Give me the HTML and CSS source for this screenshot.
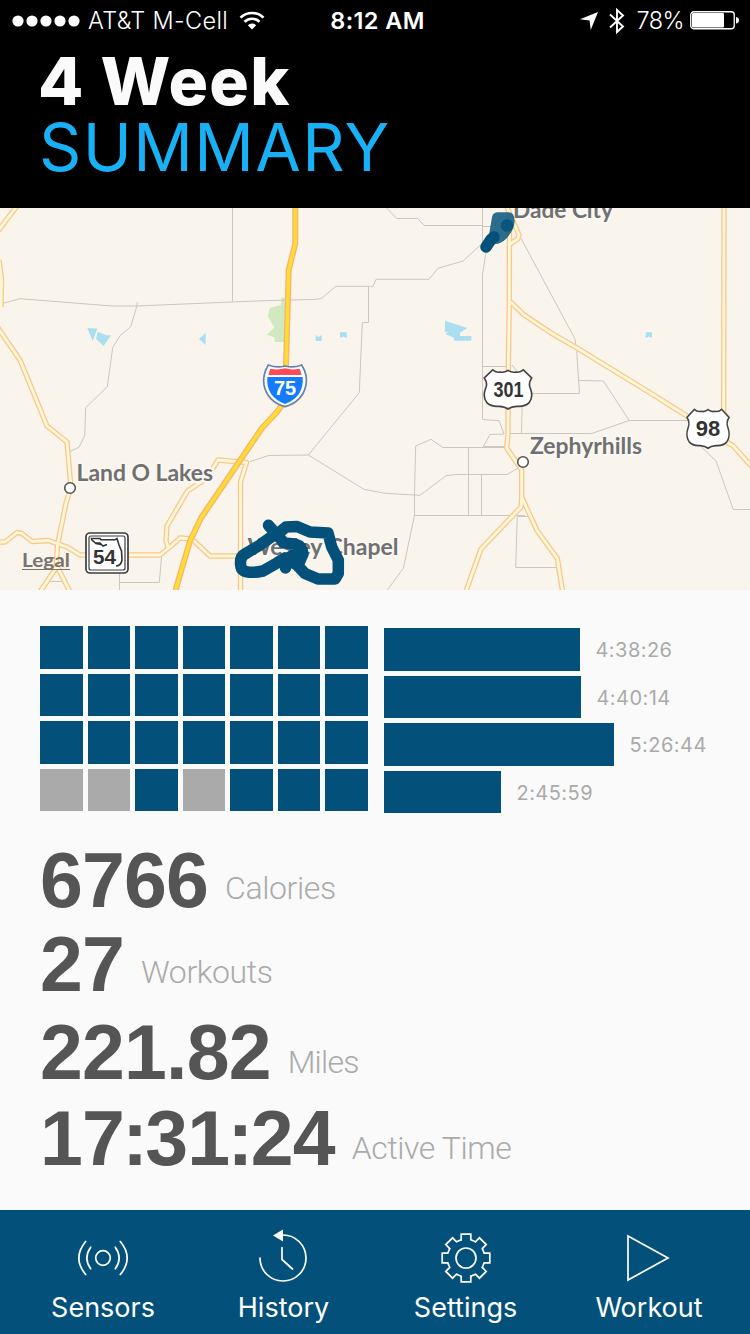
FILE: index.html
```html
<!DOCTYPE html>
<html lang="en">
<head>
    <meta charset="UTF-8">
    <meta name="viewport" content="width=device-width, initial-scale=1.0">
    <title>4 Week Summary</title>
    <link rel="stylesheet" href="styles.css">
</head>
<body>
    <header class="header">
        <div class="status-bar">
            <div class="status-left">
                <svg class="signal" viewBox="0 0 68 12" fill="#fff">
                    <circle cx="6" cy="6" r="5.6"/><circle cx="20" cy="6" r="5.6"/><circle cx="34" cy="6" r="5.6"/><circle cx="48" cy="6" r="5.6"/><circle cx="62" cy="6" r="5.6"/>
                </svg>
                <span class="carrier">AT&amp;T M-Cell</span>
                <svg class="wifi" viewBox="0 0 26 20" fill="none" stroke="#fff" stroke-width="2.6">
                    <path d="M1.5 6.6 A16.5 16.5 0 0 1 24.5 6.6"/>
                    <path d="M5.5 10.8 A10.8 10.8 0 0 1 20.5 10.8"/>
                    <path d="M13 18.5 L8.8 14.2 A6.2 6.2 0 0 1 17.2 14.2 Z" fill="#fff" stroke="none"/>
                </svg>
            </div>
            <span class="clock">8:12 AM</span>
            <div class="status-right">
                <svg class="location" viewBox="0 0 18 18"><path d="M18 0 L10.7 18 L9.6 8.4 L0 7.3 Z" fill="#fff"/></svg>
                <svg class="bluetooth" viewBox="0 0 16 28" fill="none" stroke="#fff" stroke-width="1.9"><path d="M1 7.5 L14 19.5 L8 25 V3 L14 8.5 L1 20.5"/></svg>
                <span class="percent">78%</span>
                <svg class="battery" viewBox="0 0 50 19">
                    <rect x=".75" y=".75" width="43.5" height="17" rx="3" fill="none" stroke="#fff" stroke-width="1.3"/>
                    <rect x="2" y="2" width="32" height="14.5" rx="1.2" fill="#fff"/>
                    <path d="M46 6 Q49 6.5 49 9.2 Q49 12 46 12.5 Z" fill="#fff"/>
                </svg>
            </div>
        </div>
        <h1 class="title"><span class="title-main">4 Week</span><span class="title-sub">SUMMARY</span></h1>
    </header>

    <section class="map">
        <svg viewBox="0 208 750 382">
            <defs>
                <path id="us-shield" d="M128 495 Q138 504 150 501 Q163 504 174 496 Q185 504 198 501 Q210 504 220 495 L245 519 Q234 535 241 550 Q251 575 238 592 Q225 606 200 604 Q183 605 174 612 Q165 605 148 604 Q123 606 110 592 Q97 575 107 550 Q114 535 103 519 Z"/>
                <!-- major roads, stroked twice for the casing -->
                <g id="roads">
                    <path d="M17 206 L-2 231"/>
                    <path d="M-1 260 L1.5 279 L1 307"/>
                    <path d="M-2 328 L20 360 L47 426 L67 442 L71 488 L66 503 L57.5 545 L56 568 L40 592"/>
                    <path d="M57 566 L70 592"/>
                    <path d="M0 542 H5 L17 532.5 L22 533.5 L32 541.5 L48 540.5 L67 547 L80 555 H160 L170 547 L180 538 L192 539 L210 556 H240"/>
                    <path d="M168 547 L166 541 L167 526 L187.5 491 L207 478 L218 460 L246.5 462.5 L240.5 482 V592"/>
                    <path d="M506 205 L519 235 L517.7 239 L510 244"/>
                    <path d="M509.5 215 L509.3 302 L508.3 365 L508 435 L506.7 448 L521.7 470 V498 L521 507 L481 549 L465 594"/>
                    <path d="M522 498 L537.3 531 L557.3 558.3 L563 594"/>
                    <path d="M510.5 301.7 L523.3 314.3 L550 332.3 L577 348 L650 392.7 L688 416.7 L728 443 L733 445.7 L753 468"/>
                    <path d="M724 205 L723.7 415"/>
                </g>
                <path id="interstate" d="M295.3 205 V243.5 L288.7 270 L286 365 L284 402 L277 412 L262 428 L239 462 L201 518 L190 541 L177 585 L175 594"/>
            </defs>
            <rect class="land" y="208" width="750" height="382"/>
            <path class="park" d="M281.7 297.7 L286 298 L284 342 H275 L274 337.3 L266.7 334.7 L274.3 327.7 L267.7 316 L270 307.7 L280.7 305 Z"/>
            <g class="water">
                <path d="M87.3 328 L97.3 328.7 L92.7 341 Z"/>
                <path d="M97.7 331.7 L107 335.5 L111 335 L103.7 346 L96 339 Z"/>
                <path d="M205.7 332.7 V345 L199 339 Z"/>
                <path d="M315.7 335 L318.5 337 L321.7 335 V341 H315.7 Z"/>
                <path d="M340 332.3 H346.7 V338 L343 336.5 L340 338 Z"/>
                <path d="M445 320.7 L467.3 328 L460 332.7 V336 H471.3 V340.7 H454 V337.7 L445 333.7 L449 332 H445 Z"/>
                <path d="M645.7 332.3 H652 V338 L649 336.5 L645.7 338 Z"/>
            </g>
            <g class="minor">
                <path d="M0 304 L20 298.7 L112 306 H137 L231 302 L265 300.7 L317 299.3 L321.7 298.3 L336 286.3 H373 L376 279.3 H429 L438 268.3 L463 261 L486 240"/>
                <path d="M232.5 208 V301"/>
                <path d="M137.3 302 L136.7 306.7 L130.7 326.7 L120 335.7 L112.7 347.7 L107.3 386.7 L85.7 407.7 L84.7 435.7 L79 447.3 L69.3 451.7"/>
                <path d="M161.7 555.7 L159.3 582.5 H119.5 M119.5 573 V590 M46.7 581.5 H62.7"/>
                <path d="M386.7 208 L396.7 218.5 H417.7 L424.3 225.5 H482.5 M482.5 208 V226.5 H492"/>
                <path d="M368.5 286.3 V322.5 H362.3 L359.3 392.7 L308.3 455 L268.3 455.5 L250 461.7"/>
                <path d="M308.3 455 L364 489.3 L385 493.3 L420 495.3 L446 475.7 L456.7 474.5 H507 L518 468"/>
                <path d="M387.3 590 L403.3 568.3 L414.5 515.5 V491.7 L415.7 446 L431 439.3 L442.7 447.5 H506"/>
                <path d="M414.5 515.5 H525 M468.5 447 V515 M481.5 474 V515"/>
                <path d="M486 251.7 L482.5 274.3 V419.5 L499 420.7 L504 434 L490 434.5 L483.3 446.5 H505 M482.5 366.5 H506"/>
                <path d="M482.5 226 V242"/>
                <path d="M521 238.3 L575 339 L576.7 351.7 L579.5 393.5 H522.5 L521.5 433"/>
                <path d="M579 380.5 L603.3 381 L629.3 420.5 H688 M507 433.5 H591.7 L629.3 420.5 M512 365 L520 375"/>
                <path d="M701.7 447.3 L716 461 L733.3 509.5 H750"/>
                <path d="M528.3 516.5 H517.3 L515.7 567.5 H557"/>
            </g>
            <use href="#roads" class="road-casing"/>
            <use href="#roads" class="road-fill"/>
            <use href="#interstate" class="interstate-casing"/>
            <use href="#interstate" class="interstate-fill"/>

            <g class="place">
                <text x="513" y="218" textLength="100" lengthAdjust="spacingAndGlyphs">Dade City</text>
                <text x="76.5" y="481" textLength="136.5" lengthAdjust="spacingAndGlyphs">Land O Lakes</text>
                <text x="530" y="454.3" textLength="112" lengthAdjust="spacingAndGlyphs">Zephyrhills</text>
                <text x="247.5" y="554.6" textLength="151" lengthAdjust="spacingAndGlyphs">Wesley Chapel</text>
            </g>
            <text class="legal" x="22" y="567" textLength="48" lengthAdjust="spacingAndGlyphs">Legal</text>
            <path class="legal-line" d="M22 569.5 H70"/>
            <circle class="town" cx="70" cy="488" r="5.3"/>
            <circle class="town" cx="523" cy="462" r="5.3"/>

            <g transform="translate(230 205) scale(.3333)">
                <path d="M115 480 Q140 490 165 483 Q190 490 215 480 Q234 510 228 540 Q218 590 165 605 Q112 590 102 540 Q97 510 115 480 Z" fill="#fff" stroke="#6681ac" stroke-width="5"/>
                <path d="M121 491 Q145 496 165 490 Q185 496 209 491 L215 510 H115 Z" fill="#fd4a56"/>
                <path d="M112 516 H218 Q223 575 165 597 Q107 575 112 516 Z" fill="#147bfc"/>
            </g>
            <text class="route route-75" x="285" y="395">75</text>
            <use href="#us-shield" class="shield" transform="translate(450 205) scale(.3333)"/>
            <text class="route route-301" x="508.5" y="397" textLength="30" lengthAdjust="spacingAndGlyphs">301</text>
            <use href="#us-shield" class="shield" transform="translate(656.4 244.3) scale(.2967 .3333)"/>
            <text class="route route-98" x="708" y="436">98</text>
            <rect x="86" y="533" width="42" height="40" rx="4" fill="#fff" stroke="#3d3d3d" stroke-width="1.7"/>
            <rect x="89" y="536" width="36" height="34" rx="2" fill="#fff" stroke="#3d3d3d" stroke-width="1.2"/>
            <path class="florida" d="M101 544.5 L96 543.5 L92 540 L91.5 538.5 H100 L101 539.8 H115 L117 538.5 L119 545 L121.5 551 L122 560 Q121 566 116 566 M96 543 L100 543 L103 546 L107 544.5"/>
            <text class="route" x="104.5" y="564" textLength="23" lengthAdjust="spacingAndGlyphs">54</text>

            <g class="track">
                <path d="M268.5 525.3 L279 537 L284 543 L295 544 Q302.5 546 303 554 L299 563"/>
                <path d="M278 533.5 L286 527 L297 526.5 L310 532 L328 533 L331.7 547 L338.3 560 L338.3 573.5 L335 579 H318 L305 573.5 L297 565 L285 558 L277 563 L263 571 Q243 575 241 567 Q239 557 245 554 L260 545 L274 535"/>
                <path d="M285.5 568 V560 L293 555"/>
            </g>
            <path class="blob" d="M491.7 219 Q492 213 497 212.3 H509 Q514.7 213 514.7 221 Q514.5 229 507 238 Q501 244 495 244 L489 235 Z"/>
            <circle class="blob-dot" cx="507" cy="225.5" r="6.3"/>
            <path class="blob-line" d="M486 247 L491 239.5 L494 237"/>
        </svg>
    </section>

    <main class="summary">
        <div class="charts">
            <div class="calendar">
                <i></i><i></i><i></i><i></i><i></i><i></i><i></i>
                <i></i><i></i><i></i><i></i><i></i><i></i><i></i>
                <i></i><i></i><i></i><i></i><i></i><i></i><i></i>
                <i class="rest"></i><i class="rest"></i><i></i><i class="rest"></i><i></i><i></i><i></i>
            </div>
            <div class="weeks">
                <div class="week"><div class="bar" style="width: 196px"></div><span>4:38:26</span></div>
                <div class="week"><div class="bar" style="width: 197px"></div><span>4:40:14</span></div>
                <div class="week"><div class="bar" style="width: 230px"></div><span>5:26:44</span></div>
                <div class="week"><div class="bar" style="width: 117px"></div><span>2:45:59</span></div>
            </div>
        </div>
        <div class="stats">
            <div class="stat calories"><strong>6766</strong><span>Calories</span></div>
            <div class="stat workouts"><strong>27</strong><span>Workouts</span></div>
            <div class="stat miles"><strong>221.82</strong><span>Miles</span></div>
            <div class="stat time"><strong>17<b>:</b>31<b>:</b>24</strong><span>Active Time</span></div>
        </div>
    </main>

    <nav class="tab-bar">
        <a class="tab">
            <svg viewBox="-30 -30 60 60">
                <circle r="7.3"/>
                <path d="M-12.3 -10.8 Q-20 0 -12.3 10.8 M12.3 -10.8 Q20 0 12.3 10.8"/>
                <path d="M-17.3 -16.5 Q-31 0 -17.3 16.5 M17.3 -16.5 Q31 0 17.3 16.5"/>
            </svg>
            <span>Sensors</span>
        </a>
        <a class="tab">
            <svg viewBox="-30 -30 60 60">
                <path d="M-24 0 A23 23 0 1 0 -1 -23 M-2 -10.5 V1.5 L8.5 11"/>
                <path class="solid" d="M-11 -22.5 L-1 -28.5 V-16.5 Z"/>
            </svg>
            <span>History</span>
        </a>
        <a class="tab">
            <svg viewBox="-30 -30 60 60">
                <defs><path id="tooth" d="M-4.8 -18.2 V-23.8 H4.8 V-18.2 L9.5 -16.3"/></defs>
                <circle r="10"/>
                <use href="#tooth"/>
                <use href="#tooth" transform="rotate(45)"/>
                <use href="#tooth" transform="rotate(90)"/>
                <use href="#tooth" transform="rotate(135)"/>
                <use href="#tooth" transform="rotate(180)"/>
                <use href="#tooth" transform="rotate(225)"/>
                <use href="#tooth" transform="rotate(270)"/>
                <use href="#tooth" transform="rotate(315)"/>
            </svg>
            <span>Settings</span>
        </a>
        <a class="tab">
            <svg viewBox="-30 -30 60 60"><path d="M-21 -22 L19 0 L-21 22 Z"/></svg>
            <span>Workout</span>
        </a>
    </nav>
</body>
</html>
```
FILE: styles.css
```css
* {
    margin: 0;
    padding: 0;
    box-sizing: border-box;
}

body {
    width: 750px;
    height: 1334px;
    display: flex;
    flex-direction: column;
    overflow: hidden;
    background: #fafafa;
    font-family: Inter, "Liberation Sans", sans-serif;
}

svg {
    display: block;
    flex: none;
}

/* header */
.header {
    height: 208px;
    background: #000;
    color: #fff;
}

.status-bar {
    height: 41px;
    padding: 0 10px 0 12px;
    display: grid;
    grid-template-columns: 1fr auto 1fr;
    align-items: center;
    font-size: 23.5px;
    line-height: 41px;
}

.status-left,
.status-right {
    display: flex;
    align-items: center;
}

.status-right {
    justify-content: flex-end;
}

.signal {
    width: 68px;
    height: 12px;
}

.carrier {
    margin: 0 11px 0 8px;
    font-weight: 350;
    letter-spacing: 0.35px;
}

.wifi {
    width: 26px;
    height: 20px;
}

.clock {
    font-weight: 600;
    letter-spacing: 0.4px;
    margin-left: 3px;
}

.location {
    width: 18px;
    height: 18px;
    margin-right: 11px;
}

.bluetooth {
    width: 16px;
    height: 28px;
    margin-right: 12px;
}

.percent {
    margin-right: 6px;
    font-weight: 350;
    letter-spacing: -0.6px;
}

.battery {
    width: 50px;
    height: 19px;
}

.title {
    padding: 7px 38px 0;
    font-size: 66px;
    line-height: 66px;
}

.title span {
    display: block;
}

.title-main {
    color: #fafafa;
    font-weight: 800;
    letter-spacing: 1.3px;
}

.title-sub {
    padding-left: 1px;
    color: #18b1f5;
    font-weight: 370;
    letter-spacing: 1.4px;
}

/* map */
.map svg {
    width: 750px;
    height: 382px;
}

.land { fill: #f9f4ec; }
.park { fill: #d1e9c1; }
.water { fill: #aadff2; }

.minor {
    fill: none;
    stroke: #cbc8c1;
    stroke-width: 1;
}

.road-casing {
    fill: none;
    stroke: #f8c78f;
    stroke-width: 5.4;
    stroke-linejoin: round;
}

.road-fill {
    fill: none;
    stroke: #fff8d6;
    stroke-width: 2.8;
    stroke-linejoin: round;
}

.interstate-casing {
    fill: none;
    stroke: #f5b56c;
    stroke-width: 6;
    stroke-linejoin: round;
}

.interstate-fill {
    fill: none;
    stroke: #ffdc35;
    stroke-width: 3.4;
    stroke-linejoin: round;
}

.place {
    font: bold 22px Lato, sans-serif;
    fill: #707070;
    stroke: #fbf8f3;
    stroke-width: 4px;
    stroke-linejoin: round;
    paint-order: stroke;
}

.legal {
    font: bold 18px Lato, sans-serif;
    fill: #77736d;
}

.legal-line {
    stroke: #77736d;
    stroke-width: 1.2;
}

.town {
    fill: #fff;
    stroke: #555;
    stroke-width: 1.6;
}

.shield {
    fill: #fff;
    stroke: #444;
    stroke-width: 5;
}

.route {
    font: bold 20px "Liberation Sans", sans-serif;
    fill: #333;
    text-anchor: middle;
}

.route-75 {
    fill: #fff;
}

.route-301,
.route-98 {
    font-size: 22px;
}

.florida {
    fill: none;
    stroke: #333;
    stroke-width: 1.6;
}

.track {
    fill: none;
    stroke: #03517a;
    stroke-width: 11.5;
    stroke-linecap: round;
    stroke-linejoin: round;
}

.blob {
    fill: #03517a;
    opacity: 0.83;
}

.blob-dot {
    fill: #03517a;
    opacity: 0.8;
}

.blob-line {
    fill: none;
    stroke: #03517a;
    stroke-width: 11.5;
    stroke-linecap: round;
    stroke-linejoin: round;
}

/* charts */
.summary {
    flex: 1;
    padding: 36px 40px 0;
}

.charts {
    display: flex;
    gap: 16px;
}

.calendar {
    display: grid;
    grid-template-columns: repeat(7, 42.5px);
    grid-auto-rows: 42.5px;
    gap: 5px;
}

.calendar i {
    background: #03517a;
}

.calendar .rest {
    background: #aaa;
}

.weeks {
    display: flex;
    flex-direction: column;
    gap: 5px;
    padding-top: 2px;
}

.week {
    display: flex;
    align-items: center;
    gap: 16px;
    height: 42.5px;
    color: #aaa;
    font-size: 20px;
    letter-spacing: 0.45px;
}

.week span {
    padding-top: 2px;
}

.bar {
    height: 100%;
    background: #03517a;
}

/* totals */
.stats {
    padding-top: 24px;
}

.stat {
    height: 88px;
    line-height: 87px;
}

.stat strong {
    color: #555;
    font-family: "Liberation Sans", Arial, sans-serif;
    font-size: 77px;
    letter-spacing: -0.8px;
}

.stat strong b {
    margin: 0 -1.8px;
}

.stat span {
    margin-left: 17px;
    color: #aaa;
    font-family: Roboto, sans-serif;
    font-size: 32px;
    font-weight: 300;
    line-height: 1;
    letter-spacing: -0.4px;
    vertical-align: 8px;
}

.calories {
    height: 84px;
}

.miles {
    height: 86px;
}

.miles span,
.time span {
    vertical-align: 6px;
}

.miles span {
    letter-spacing: -0.8px;
}

/* bottom navigation */
.tab-bar {
    display: grid;
    grid-template-columns: 182px 179px 185px 182px;
    height: 124px;
    padding: 18px 10px 0 12px;
    background: #03517a;
    color: #fff;
}

.tab {
    display: flex;
    flex-direction: column;
    align-items: center;
    font-size: 27px;
    line-height: 40px;
}

.tab svg {
    width: 60px;
    height: 60px;
    fill: none;
    stroke: #fff;
    stroke-width: 1.7;
    stroke-linecap: round;
}

.tab .solid {
    fill: #fff;
    stroke: none;
}
```
